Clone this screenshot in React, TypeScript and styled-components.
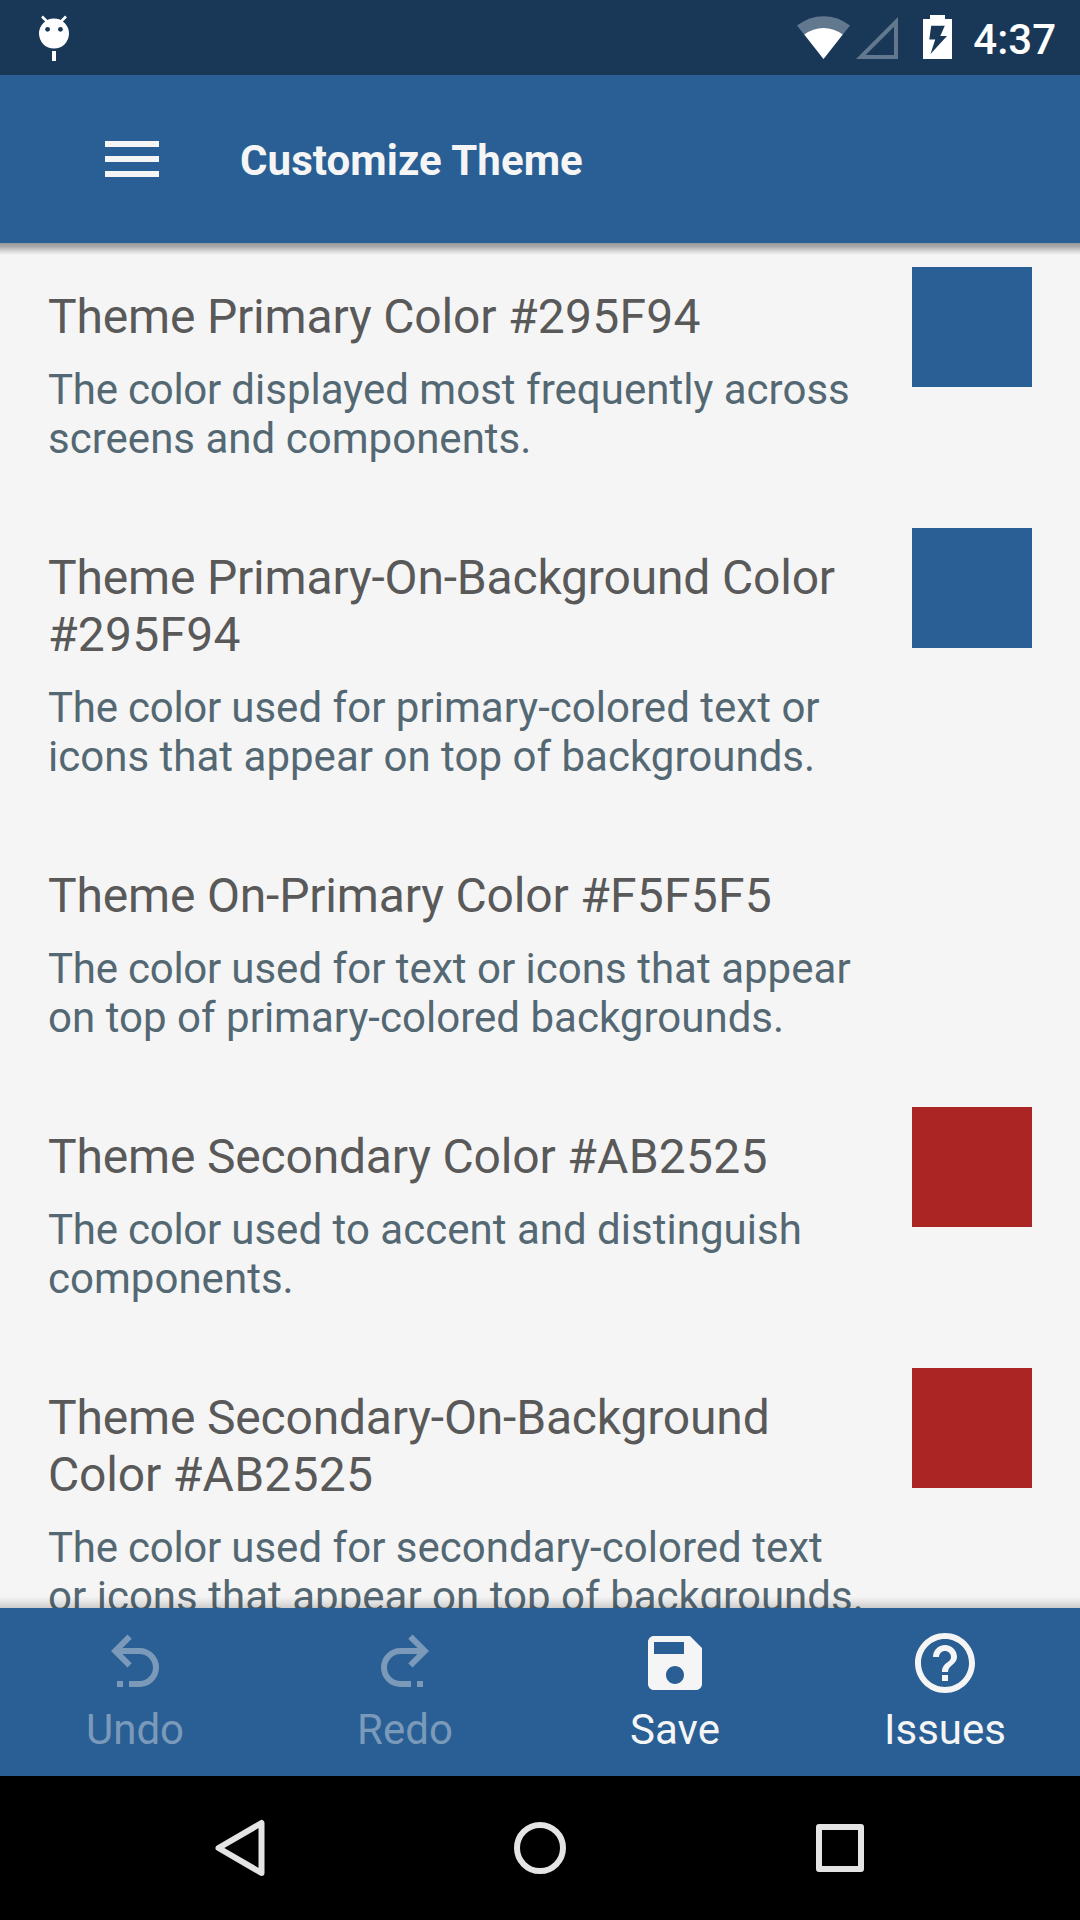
import React from "react";
import styled, { createGlobalStyle } from "styled-components";

const GlobalStyle = createGlobalStyle`
  *, *::before, *::after { box-sizing: border-box; }
  html, body { margin: 0; padding: 0; background: #000; }
  body { font-family: Roboto, "Noto Sans", sans-serif; }
`;

const Screen = styled.div`
  width: 1080px;
  height: 1920px;
  display: flex;
  flex-direction: column;
  overflow: hidden;
  background: #f5f5f5;
`;

const StatusBar = styled.header`
  flex: 0 0 75px;
  display: flex;
  align-items: flex-start;
  justify-content: space-between;
  padding: 0 24px 0 32px;
  background: #193858;
  color: #fff;
`;

const StatusIcons = styled.div`
  display: flex;
  align-items: flex-start;
`;

const Clock = styled.span`
  margin-left: 12px;
  padding-top: 15px;
  font-size: 42px;
  font-weight: 500;
  line-height: 50px;
`;

const Toolbar = styled.div`
  flex: 0 0 168px;
  display: flex;
  align-items: center;
  gap: 72px;
  padding: 0 96px;
  background: #295f94;
  color: #f5f5f5;
`;

const MenuButton = styled.button`
  display: flex;
  padding: 0;
  border: 0;
  background: none;
  color: inherit;
`;

const Title = styled.h1`
  margin: 0;
  padding-top: 4px;
  font-size: 42px;
  font-weight: 700;
  line-height: 50px;
  letter-spacing: 0.07px;
`;

const List = styled.main`
  position: relative;
  flex: 1 1 0;
  min-height: 0;
  overflow: hidden;
  background: #f5f5f5;
`;

const EdgeShadow = styled.div<{ $edge: "top" | "bottom" }>`
  position: absolute;
  left: 0;
  right: 0;
  ${(p) => p.$edge}: 0;
  height: 12px;
  background: ${(p) =>
    p.$edge === "top"
      ? "linear-gradient(to bottom, rgba(0,0,0,.38), rgba(0,0,0,.31) 30%, rgba(0,0,0,.1) 72%, rgba(0,0,0,0))"
      : "linear-gradient(to top, rgba(0,0,0,.17), rgba(0,0,0,.07) 50%, rgba(0,0,0,0))"};
`;

const Row = styled.section`
  display: flex;
  align-items: flex-start;
  justify-content: space-between;
  padding: 24px 48px 41px;
`;

const RowText = styled.div`
  width: 816px;
  padding-top: 21px;
`;

const RowTitle = styled.h2`
  margin: 0 0 20px;
  font-size: 48px;
  font-weight: 400;
  line-height: 57px;
  letter-spacing: -0.18px;
  color: #595959;
  white-space: pre-line;
`;

const HexCode = styled.span`
  letter-spacing: 0.25px;
`;

const RowSummary = styled.p`
  margin: 0;
  font-size: 42px;
  line-height: 49px;
  letter-spacing: 0.02px;
  color: #546873;
  white-space: pre-line;
`;

const Lead = styled.span`
  letter-spacing: -0.24px;
`;

const Swatch = styled.div<{ $color: string }>`
  flex: 0 0 120px;
  height: 120px;
  background: ${(p) => p.$color};
`;

const BottomBar = styled.footer`
  flex: 0 0 168px;
  display: grid;
  grid-template-columns: repeat(4, 1fr);
  background: #295f94;
`;

const Action = styled.button<{ $disabled?: boolean }>`
  display: flex;
  flex-direction: column;
  align-items: center;
  gap: 6px;
  padding: 19px 0 0;
  border: 0;
  background: none;
  font: 400 42px/50px Roboto, "Noto Sans", sans-serif;
  color: ${(p) => (p.$disabled ? "#7b9aba" : "#f5f5f5")};
`;

const NavBar = styled.nav`
  flex: 0 0 144px;
  display: flex;
  align-items: center;
  justify-content: space-between;
  padding: 0 204px;
  background: #000;
`;

const ICONS = {
  menu: "M3 18h18v-2H3v2zm0-5h18v-2H3v2zm0-7v2h18V6H3z",
  undo: "M13.5,7A6.5,6.5 0 0,1 20,13.5A6.5,6.5 0 0,1 13.5,20H10V18H13.5C16,18 18,16 18,13.5C18,11 16,9 13.5,9H7.83L10.91,12.09L9.5,13.5L4,8L9.5,2.5L10.92,3.91L7.83,7H13.5M6,18H8V20H6V18Z",
  redo: "M10.5,7A6.5,6.5 0 0,0 4,13.5A6.5,6.5 0 0,0 10.5,20H14V18H10.5C8,18 6,16 6,13.5C6,11 8,9 10.5,9H16.17L13.09,12.09L14.5,13.5L20,8L14.5,2.5L13.08,3.91L16.17,7H10.5M18,18H16V20H18V18Z",
  save: "M17 3H5c-1.11 0-2 .9-2 2v14c0 1.1.89 2 2 2h14c1.1 0 2-.9 2-2V7l-4-4zm-5 16c-1.66 0-3-1.34-3-3s1.34-3 3-3 3 1.34 3 3-1.34 3-3 3zm3-10H5V5h10v4z",
  help: "M11 18h2v-2h-2v2zm1-16C6.48 2 2 6.48 2 12s4.48 10 10 10 10-4.48 10-10S17.52 2 12 2zm0 18c-4.41 0-8-3.59-8-8s3.59-8 8-8 8 3.59 8 8-3.59 8-8 8zm0-14c-2.21 0-4 1.79-4 4h2c0-1.1.9-2 2-2s2 .9 2 2c0 2-3 1.75-3 5h2c0-2.25 3-2.5 3-5 0-2.21-1.79-4-4-4z",
};

const Icon = ({ name }: { name: keyof typeof ICONS }) => (
  <svg width="72" height="72" viewBox="0 0 24 24" fill="currentColor">
    <path d={ICONS[name]} />
  </svg>
);

const DebugIcon = () => (
  <svg width="44" height="75" viewBox="32 0 44 75">
    <path d="M42 16.5l5 5M66 16.5l-5 5" stroke="#fff" strokeWidth="2.6" />
    <circle cx="54" cy="33.6" r="15" fill="#fff" />
    <circle cx="47.6" cy="29.3" r="2.4" fill="#193858" />
    <circle cx="60.4" cy="29.3" r="2.4" fill="#193858" />
    <path d="M52 51h4v10h-4z" fill="#fff" />
  </svg>
);

const SystemIcons = () => (
  <svg width="168" height="75" viewBox="793 0 168 75">
    <path d="M823.5 59L797 25.5Q809 16.2 823.5 16.2T850 25.5z" fill="#62788f" />
    <path d="M823.5 59L804.3 34.6Q813 28 823.5 28T842.7 34.6z" fill="#fff" />
    <path
      d="M856 59L898 17V59zM865.7 55H894V26.7z"
      fill="#62788f"
      fillRule="evenodd"
    />
    <path
      d="M930 15h15v4h7v40h-29V19h7zM931.2 25.7L929.3 39.5H935.2L930.5 54L947 36H940.3L944.8 25.7z"
      fill="#fff"
      fillRule="evenodd"
    />
  </svg>
);

const NavIcon = ({ children }: { children: React.ReactNode }) => (
  <svg
    width="72"
    height="72"
    viewBox="0 0 72 72"
    fill="none"
    stroke="#e4e4e4"
    strokeWidth="6"
    strokeLinejoin="round"
  >
    {children}
  </svg>
);

const rows = [
  {
    title: "Theme Primary Color ",
    hex: "#295F94",
    summary: "displayed most frequently across\nscreens and components.",
  },
  {
    title: "Theme Primary-On-Background Color\n",
    hex: "#295F94",
    summary:
      "used for primary-colored text or\nicons that appear on top of backgrounds.",
  },
  {
    title: "Theme On-Primary Color ",
    hex: "#F5F5F5",
    summary:
      "used for text or icons that appear\non top of primary-colored backgrounds.",
  },
  {
    title: "Theme Secondary Color ",
    hex: "#AB2525",
    summary: "used to accent and distinguish\ncomponents.",
  },
  {
    title: "Theme Secondary-On-Background\nColor ",
    hex: "#AB2525",
    summary:
      "used for secondary-colored text\nor icons that appear on top of backgrounds.",
  },
];

const actions: {
  label: string;
  icon: keyof typeof ICONS;
  disabled?: boolean;
}[] = [
  { label: "Undo", icon: "undo", disabled: true },
  { label: "Redo", icon: "redo", disabled: true },
  { label: "Save", icon: "save" },
  { label: "Issues", icon: "help" },
];

export default function App() {
  return (
    <>
      <GlobalStyle />
      <Screen>
        <StatusBar>
          <DebugIcon />
          <StatusIcons>
            <SystemIcons />
            <Clock>4:37</Clock>
          </StatusIcons>
        </StatusBar>
        <Toolbar>
          <MenuButton aria-label="Menu">
            <Icon name="menu" />
          </MenuButton>
          <Title>Customize Theme</Title>
        </Toolbar>
        <List>
          {rows.map((row) => (
            <Row key={row.title}>
              <RowText>
                <RowTitle>
                  {row.title}
                  <HexCode>{row.hex}</HexCode>
                </RowTitle>
                <RowSummary>
                  <Lead>The color </Lead>
                  {row.summary}
                </RowSummary>
              </RowText>
              <Swatch $color={row.hex} />
            </Row>
          ))}
          <EdgeShadow $edge="top" />
          <EdgeShadow $edge="bottom" />
        </List>
        <BottomBar>
          {actions.map((a) => (
            <Action key={a.label} $disabled={a.disabled}>
              <Icon name={a.icon} />
              {a.label}
            </Action>
          ))}
        </BottomBar>
        <NavBar>
          <NavIcon>
            <path d="M57.5 11V61L14.5 36z" />
          </NavIcon>
          <NavIcon>
            <circle cx="36" cy="36" r="23" />
          </NavIcon>
          <NavIcon>
            <rect x="15" y="15" width="42" height="42" />
          </NavIcon>
        </NavBar>
      </Screen>
    </>
  );
}
